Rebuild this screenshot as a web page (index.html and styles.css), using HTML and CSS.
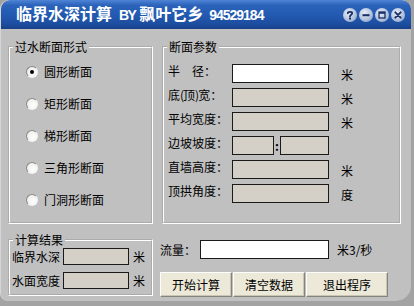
FILE: index.html
```html
<!DOCTYPE html>
<html lang="zh">
<head>
<meta charset="utf-8">
<title>临界水深计算</title>
<link rel="stylesheet" href="styles.css">
</head>
<body>
<div class="window">
  <div class="titlebar">
    <div class="title"><span class="cn">临界水深计算</span> <span class="lat by">BY</span> <span class="cn">飘叶它乡</span> <span class="lat num">94529184</span></div>
    <div class="tbtns">
      <span class="tb"><svg viewBox="0 0 14 14" width="14" height="14"><path d="M4.8 5.2 C4.8 3.4 9.2 3.2 9.2 5.3 C9.2 6.7 7 6.8 7 8.4" fill="none" stroke="#1b2f63" stroke-width="1.8" stroke-linecap="round"/><rect x="6" y="9.6" width="2" height="1.9" fill="#1b2f63"/></svg></span>
      <span class="tb"><svg viewBox="0 0 14 14" width="14" height="14"><rect x="3.5" y="6.2" width="7" height="2" fill="#1b2f63"/></svg></span>
      <span class="tb"><svg viewBox="0 0 14 14" width="14" height="14"><rect x="4" y="4" width="6" height="6" fill="none" stroke="#1b2f63" stroke-width="1.3"/><rect x="4" y="4" width="6" height="1.8" fill="#1b2f63"/></svg></span>
      <span class="tb"><svg viewBox="0 0 14 14" width="14" height="14"><path d="M4.3 4.3 L9.7 9.7 M9.7 4.3 L4.3 9.7" stroke="#1b2f63" stroke-width="1.9" stroke-linecap="round"/></svg></span>
    </div>
  </div>
  <div class="client">
    <fieldset class="grp shape">
      <legend>过水断面形式</legend>
      <div class="radios">
        <label class="radio"><span class="rb on"></span>圆形断面</label>
        <label class="radio"><span class="rb"></span>矩形断面</label>
        <label class="radio"><span class="rb"></span>梯形断面</label>
        <label class="radio"><span class="rb"></span>三角形断面</label>
        <label class="radio"><span class="rb"></span>门洞形断面</label>
      </div>
    </fieldset>
    <fieldset class="grp params">
      <legend>断面参数</legend>
      <div class="prows">
        <div class="prow"><span class="plabel">半　径：</span><span class="inp white"></span><span class="unit">米</span></div>
        <div class="prow"><span class="plabel">底<span class="par">(</span>顶<span class="par">)</span>宽：</span><span class="inp"></span><span class="unit">米</span></div>
        <div class="prow"><span class="plabel">平均宽度：</span><span class="inp"></span><span class="unit">米</span></div>
        <div class="prow"><span class="plabel">边坡坡度：</span><span class="pair"><span class="inp s1"></span><span class="ratio">:</span><span class="inp s2"></span></span></div>
        <div class="prow"><span class="plabel">直墙高度：</span><span class="inp"></span><span class="unit">米</span></div>
        <div class="prow"><span class="plabel">顶拱角度：</span><span class="inp"></span><span class="unit">度</span></div>
      </div>
    </fieldset>
    <fieldset class="grp result">
      <legend>计算结果</legend>
      <div class="rrows">
        <div class="rrow"><span class="rlabel">临界水深</span><span class="inp small"></span><span class="runit">米</span></div>
        <div class="rrow"><span class="rlabel">水面宽度</span><span class="inp small"></span><span class="runit">米</span></div>
      </div>
    </fieldset>
    <div class="actions">
      <div class="flow"><span class="flabel">流量：</span><span class="inp white wide"></span><span class="funit">米3/秒</span></div>
      <div class="btns">
        <button class="btn">开始计算</button>
        <button class="btn">清空数据</button>
        <button class="btn big">退出程序</button>
      </div>
    </div>
  </div>
</div>
</body>
</html>
```

FILE: styles.css
```css
html, body {
  margin: 0;
  padding: 0;
}
body {
  width: 414px;
  height: 306px;
  background: #a3a3a3;
  overflow: hidden;
  font-family: "Noto Sans CJK SC", "Noto Sans", sans-serif;
  font-size: 12px;
  color: #000;
}
.window {
  width: 411px;
  height: 301px;
  background: #c0c0c0;
  border-radius: 9px 9px 15px 8px;
  overflow: hidden;
  border-left: 1px solid #d6d6d6;
  box-sizing: border-box;
}
.titlebar {
  height: 29px;
  display: flex;
  align-items: center;
  justify-content: space-between;
  background: linear-gradient(to bottom, #4f84d6 0%, #2c63ba 18%, #2259b0 55%, #1c4c9e 85%, #174089 100%);
  border-radius: 9px 9px 0 0;
}
.title {
  padding-left: 15px;
  color: #fff;
  font-family: "Liberation Sans", sans-serif;
  font-weight: bold;
  font-size: 14px;
  white-space: nowrap;
  line-height: 29px;
}
.title .cn {
  font-family: "Noto Sans CJK SC", sans-serif;
  font-size: 16px;
  font-weight: bold;
  letter-spacing: 0;
}
.title .by {
  margin-left: 3px;
  letter-spacing: -1.5px;
}
.title .num {
  margin-left: 2px;
  letter-spacing: -1px;
}
.tbtns {
  display: flex;
  gap: 2px;
  margin-right: 6px;
}
.tb {
  width: 14px;
  height: 14px;
  border-radius: 50%;
  background: radial-gradient(circle at 40% 35%, #e6ecf6 0%, #b8c7e0 50%, #7f97c2 100%);
  display: flex;
}
.client {
  display: grid;
  grid-template-columns: 145px 239px;
  grid-template-rows: 184px auto;
  column-gap: 9px;
  row-gap: 9px;
  padding: 11px 0 0 7px;
}
.grp {
  margin: 0;
  padding: 0;
  min-width: 0;
  border: 2px groove #fff;
}
.grp legend {
  font-size: 12px;
  line-height: 14px;
  padding: 0 2px;
  margin-left: 3px;
}
.radios {
  display: flex;
  flex-direction: column;
  gap: 12px;
  padding: 8px 0 0 16px;
}
.radio {
  display: flex;
  align-items: center;
  height: 20px;
  gap: 6px;
  line-height: 14px;
}
.rb {
  width: 12px;
  height: 12px;
  box-sizing: border-box;
  border-radius: 50%;
  border: 1px solid;
  border-color: #8a8a8a #f4f4f4 #f4f4f4 #8a8a8a;
  background: radial-gradient(circle at 60% 60%, #ffffff 0%, #f2f2ee 60%, #d8d8d4 100%);
  display: flex;
  align-items: center;
  justify-content: center;
}
.rb.on::after {
  content: "";
  width: 4px;
  height: 4px;
  border-radius: 50%;
  background: #000;
}
.prows {
  display: flex;
  flex-direction: column;
  gap: 5px;
  padding: 10px 0 0 4px;
}
.prow {
  display: flex;
  align-items: center;
  height: 19px;
}
.plabel {
  width: 64px;
  white-space: nowrap;
  line-height: 14px;
  margin-top: -5px;
}
.par {
  letter-spacing: -1px;
}
.inp {
  display: block;
  box-sizing: border-box;
  width: 97px;
  height: 19px;
  border: 1px solid #1a1a1a;
  background: #d4d0c8;
}
.inp.white {
  background: #fff;
}
.unit {
  margin-left: 12px;
  margin-top: 3px;
  line-height: 14px;
}
.pair {
  display: flex;
  align-items: center;
  width: 97px;
}
.inp.s1 {
  width: 42px;
}
.inp.s2 {
  width: 49px;
}
.ratio {
  width: 6px;
  text-align: center;
  font-weight: bold;
  line-height: 14px;
}
.result {
  height: 63px;
  box-sizing: border-box;
}
.rrows {
  display: flex;
  flex-direction: column;
  gap: 7px;
  padding: 1px 0 0 2px;
}
.rrow {
  display: flex;
  align-items: center;
  height: 17px;
}
.rlabel {
  width: 51px;
  line-height: 14px;
}
.inp.small {
  width: 66px;
  height: 17px;
}
.runit {
  margin-left: 4px;
  line-height: 14px;
}
.actions {
  margin-left: -2px;
  padding-top: 7px;
  display: flex;
  flex-direction: column;
  gap: 13px;
}
.flow {
  display: flex;
  align-items: center;
  height: 19px;
}
.flabel {
  width: 40px;
  line-height: 14px;
}
.inp.wide {
  width: 129px;
}
.funit {
  margin-left: 8px;
  line-height: 14px;
}
.btns {
  display: flex;
  gap: 1px;
}
.btn {
  width: 72px;
  height: 25px;
  margin: 0;
  padding: 0;
  font-family: "Noto Sans CJK SC", sans-serif;
  font-size: 12px;
  color: #000;
  background: #ece9d8;
  border: 1px solid;
  border-color: #fdfdfb #85837a #85837a #fdfdfb;
  box-shadow: inset -1px -1px 0 #c9c6b6;
}
.btn.big {
  width: 82px;
}
```
